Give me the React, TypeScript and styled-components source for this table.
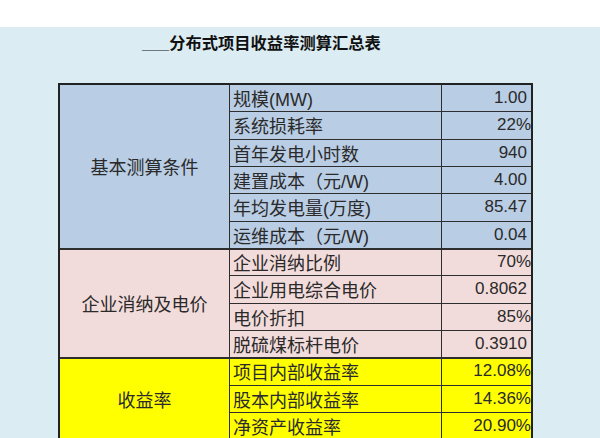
import React from "react";
import styled, { createGlobalStyle, css } from "styled-components";

const Global = createGlobalStyle`
  html, body { margin: 0; padding: 0; }
  body {
    background: #dbedf3;
    font-family: "Liberation Sans", "Noto Sans CJK SC", sans-serif;
    overflow: hidden;
  }
`;

const TopStrip = styled.div`
  height: 27px;
  background: #ffffff;
`;

const Page = styled.div`
  background: #dbedf3;
  padding: 6px 0 0 0;
  height: 405px;
`;

const Title = styled.h1`
  margin: 0 0 0 142px;
  font-family: "Liberation Sans", "Noto Sans CJK SC", sans-serif;
  font-size: 16.3px;
  line-height: 20px;
  font-weight: 700;
  color: #111;
`;

const Table = styled.div`
  margin: 30px 0 0 58px;
  width: 475px;
  box-sizing: border-box;
  display: grid;
  grid-template-columns: 169px 211px 89px;
  grid-auto-rows: 26.33px;
  gap: 1px;
  background: #2e2e2e;
  border: 2px solid #222;
`;

type Tone = "blue" | "pink" | "yellow";
const toneColor: Record<Tone, string> = {
  blue: "#b9cde4",
  pink: "#f2dcdb",
  yellow: "#ffff00",
};

const sectionTop = css<{ $first?: boolean }>`
  ${(p) => (p.$first ? "box-shadow: inset 0 1px 0 #2e2e2e;" : "")}
`;

const GroupCell = styled.div<{ $tone: Tone; $span: number; $first?: boolean }>`
  grid-row: span ${(p) => p.$span};
  background: ${(p) => toneColor[p.$tone]};
  display: flex;
  align-items: center;
  justify-content: center;
  font-family: "Noto Sans CJK SC", sans-serif;
  font-size: 18px;
  color: #2a2a2a;
  ${sectionTop}
`;

const NameCell = styled.div<{ $tone: Tone; $first?: boolean }>`
  background: ${(p) => toneColor[p.$tone]};
  display: flex;
  align-items: center;
  padding-left: 3px;
  font-size: 18px;
  color: #2a2a2a;
  white-space: nowrap;
  ${sectionTop}
`;

const ValueCell = styled.div<{ $tone: Tone; $pct: boolean; $first?: boolean }>`
  background: ${(p) => toneColor[p.$tone]};
  display: flex;
  align-items: center;
  justify-content: flex-end;
  padding-right: ${(p) => (p.$pct ? "0px" : "4px")};
  font-size: 17px;
  color: #2a2a2a;
  ${sectionTop}
`;

type Section = { label: string; tone: Tone; rows: [string, string][] };

const sections: Section[] = [
  {
    label: "基本测算条件",
    tone: "blue",
    rows: [
      ["规模(MW)", "1.00"],
      ["系统损耗率", "22%"],
      ["首年发电小时数", "940"],
      ["建置成本（元/W)", "4.00"],
      ["年均发电量(万度)", "85.47"],
      ["运维成本（元/W)", "0.04"],
    ],
  },
  {
    label: "企业消纳及电价",
    tone: "pink",
    rows: [
      ["企业消纳比例", "70%"],
      ["企业用电综合电价", "0.8062"],
      ["电价折扣", "85%"],
      ["脱硫煤标杆电价", "0.3910"],
    ],
  },
  {
    label: "收益率",
    tone: "yellow",
    rows: [
      ["项目内部收益率", "12.08%"],
      ["股本内部收益率", "14.36%"],
      ["净资产收益率", "20.90%"],
    ],
  },
];

export default function App() {
  return (
    <>
      <Global />
      <TopStrip />
      <Page>
        <Title>___分布式项目收益率测算汇总表</Title>
        <Table>
          {sections.map((s, si) =>
            s.rows.map(([name, value], i) => {
              const first = si > 0 && i === 0;
              return (
                <React.Fragment key={s.label + i}>
                  {i === 0 && (
                    <GroupCell $tone={s.tone} $span={s.rows.length} $first={first}>
                      {s.label}
                    </GroupCell>
                  )}
                  <NameCell $tone={s.tone} $first={first}>
                    {name}
                  </NameCell>
                  <ValueCell $tone={s.tone} $pct={value.endsWith("%")} $first={first}>
                    {value}
                  </ValueCell>
                </React.Fragment>
              );
            })
          )}
        </Table>
      </Page>
    </>
  );
}
